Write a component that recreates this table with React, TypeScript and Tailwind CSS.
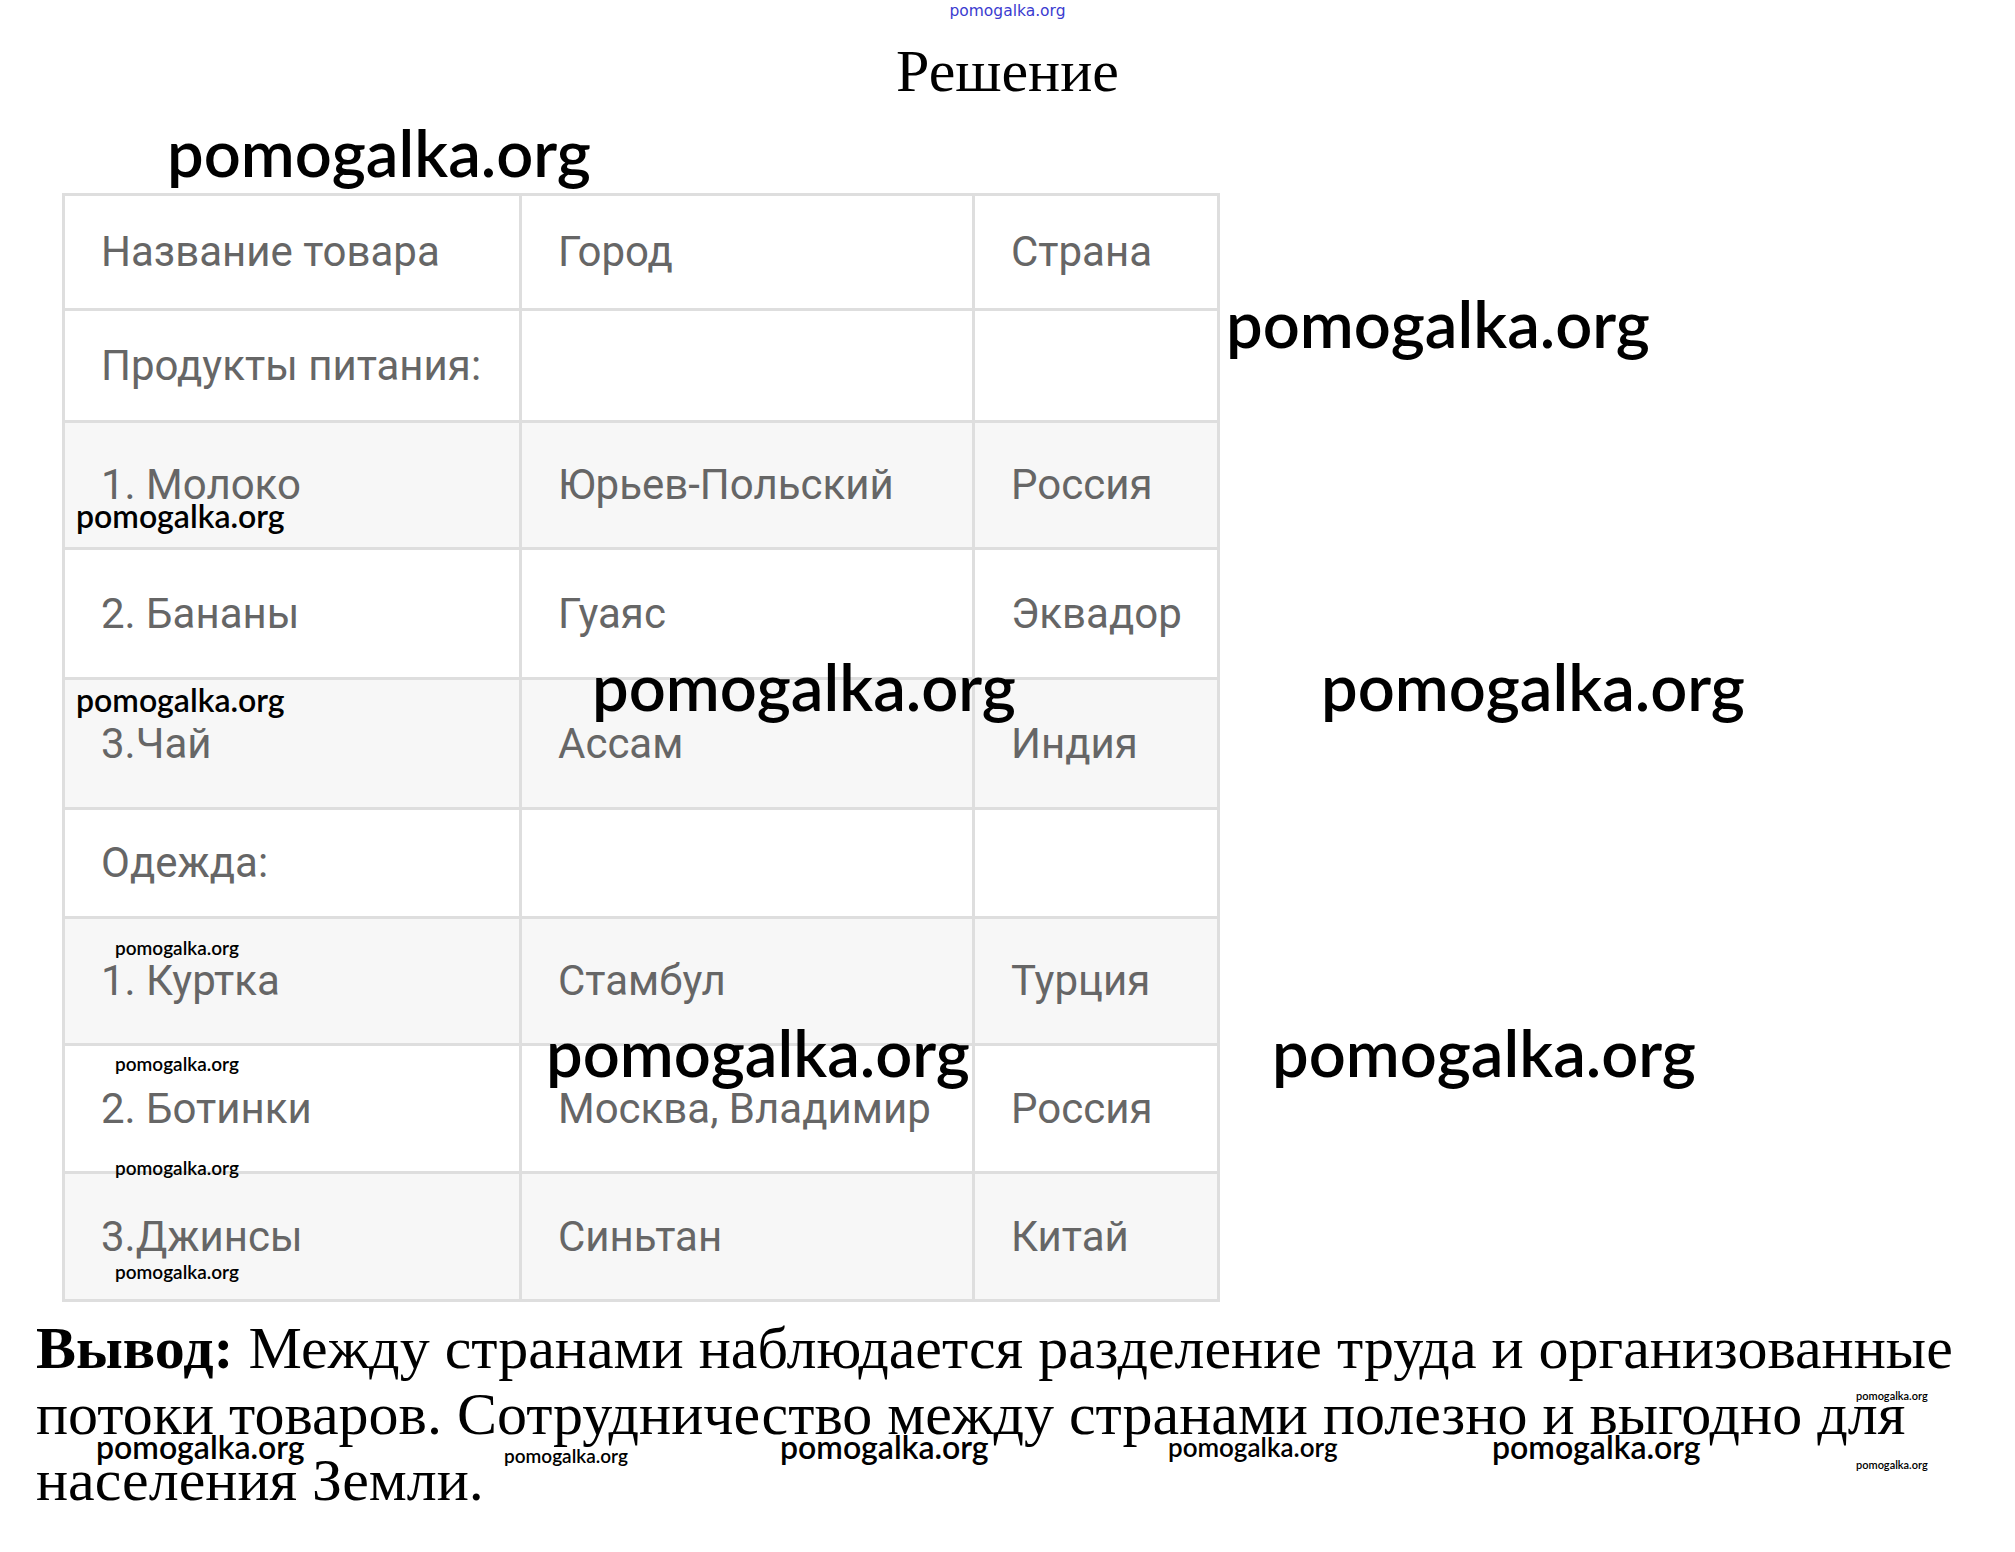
const rows = [
  { h: "h-[115px]", bg: "bg-white", cells: ["Название товара", "Город", "Страна"] },
  { h: "h-[112px]", bg: "bg-white", cells: ["Продукты питания:", "", ""] },
  { h: "h-[127px]", bg: "bg-[#f7f7f7]", cells: ["1. Молоко", "Юрьев-Польский", "Россия"] },
  { h: "h-[130px]", bg: "bg-white", cells: ["2. Бананы", "Гуаяс", "Эквадор"] },
  { h: "h-[130px]", bg: "bg-[#f7f7f7]", cells: ["3.Чай", "Ассам", "Индия"] },
  { h: "h-[109px]", bg: "bg-white", cells: ["Одежда:", "", ""] },
  { h: "h-[127px]", bg: "bg-[#f7f7f7]", cells: ["1. Куртка", "Стамбул", "Турция"] },
  { h: "h-[128px]", bg: "bg-white", cells: ["2. Ботинки", "Москва, Владимир", "Россия"] },
  { h: "h-[128px]", bg: "bg-[#f7f7f7]", cells: ["3.Джинсы", "Синьтан", "Китай"] },
];

// watermarks sit on top of everything, so they are absolutely placed
const marks = [
  { cls: "left-[167px] top-[120px] text-[65px]" },
  { cls: "left-[1226px] top-[291px] text-[65px]" },
  { cls: "left-[76px] top-[500px] text-[32px]" },
  { cls: "left-[76px] top-[684px] text-[32px]" },
  { cls: "left-[592px] top-[654px] text-[65px]" },
  { cls: "left-[1321px] top-[654px] text-[65px]" },
  { cls: "left-[115px] top-[938px] text-[19px]" },
  { cls: "left-[115px] top-[1054px] text-[19px]" },
  { cls: "left-[546px] top-[1020px] text-[65px]" },
  { cls: "left-[1272px] top-[1020px] text-[65px]" },
  { cls: "left-[115px] top-[1158px] text-[19px]" },
  { cls: "left-[115px] top-[1262px] text-[19px]" },
  { cls: "left-[96px] top-[1431px] text-[32px]" },
  { cls: "left-[504px] top-[1446px] text-[19px]" },
  { cls: "left-[780px] top-[1431px] text-[32px]" },
  { cls: "left-[1168px] top-[1434px] text-[26px]" },
  { cls: "left-[1492px] top-[1431px] text-[32px]" },
  { cls: "left-[1856px] top-[1390px] text-[11px]" },
  { cls: "left-[1856px] top-[1459px] text-[11px]" },
];

const App = () => {
  return (
    <div className="relative w-[2015px] h-[1552px] bg-white overflow-hidden">
      {/* Top site mark */}
      <div className="pt-[4px] text-center text-[15.5px] leading-none text-[#3b3bd0] font-['DejaVu_Sans',sans-serif]">
        pomogalka.org
      </div>

      {/* Title */}
      <h1 className="mt-[21px] text-center text-[60px] leading-none text-black font-['Liberation_Serif',serif]">
        Решение
      </h1>

      {/* Table */}
      <div className="mt-[92px] ml-[62px] w-[1158px] border-l-[3px] border-t-[3px] border-[#dedede] font-['Roboto',sans-serif]">
        {rows.map((row, i) => (
          <div key={i} className={`grid grid-cols-[457px_453px_245px] ${row.bg}`}>
            {row.cells.map((c, j) => (
              <div
                key={j}
                className={`${row.h} flex items-center pl-[36px] border-r-[3px] border-b-[3px] border-[#dedede] text-[42px] text-[#666666] whitespace-nowrap`}
              >
                {c}
              </div>
            ))}
          </div>
        ))}
      </div>

      {/* Conclusion */}
      <div className="mt-[13px] pl-[36px] text-[60px] leading-[66px] text-black font-['Liberation_Serif',serif]">
        <div className="whitespace-nowrap">
          <b>Вывод:</b> Между странами наблюдается разделение труда и организованные
        </div>
        <div className="whitespace-nowrap">
          потоки товаров. Сотрудничество между странами полезно и выгодно для
        </div>
        <div className="whitespace-nowrap">населения Земли.</div>
      </div>

      {/* Watermarks */}
      {marks.map((m, i) => (
        <span
          key={i}
          className={`absolute ${m.cls} leading-none font-semibold text-black whitespace-nowrap font-['Lato',sans-serif]`}
        >
          pomogalka.org
        </span>
      ))}
    </div>
  );
};

export default App;
